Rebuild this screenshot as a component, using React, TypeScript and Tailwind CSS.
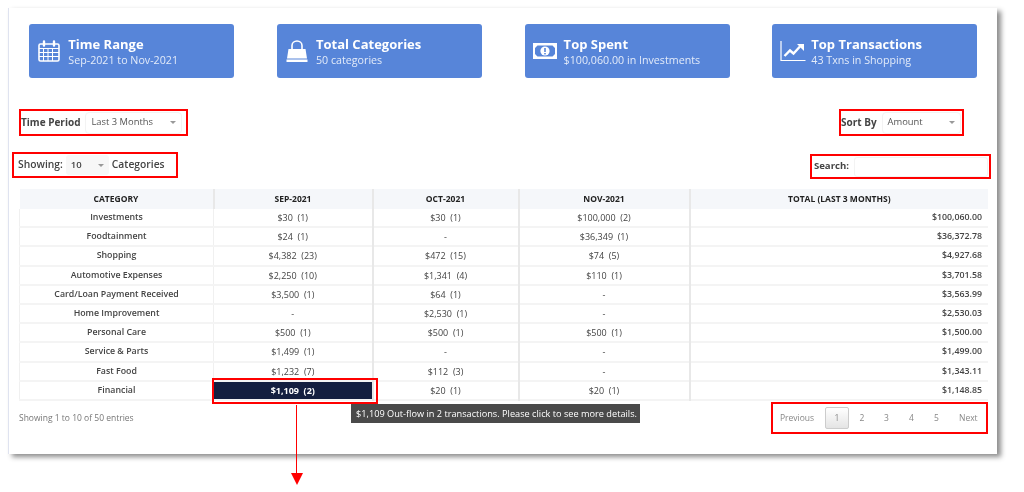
import { ReactNode } from 'react';

const rows = [
  ['Investments', '$30  (1)', '$30  (1)', '$100,000  (2)', '$100,060.00'],
  ['Foodtainment', '$24  (1)', '-', '$36,349  (1)', '$36,372.78'],
  ['Shopping', '$4,382  (23)', '$472  (15)', '$74  (5)', '$4,927.68'],
  ['Automotive Expenses', '$2,250  (10)', '$1,341  (4)', '$110  (1)', '$3,701.58'],
  ['Card/Loan Payment Received', '$3,500  (1)', '$64  (1)', '-', '$3,563.99'],
  ['Home Improvement', '-', '$2,530  (1)', '-', '$2,530.03'],
  ['Personal Care', '$500  (1)', '$500  (1)', '$500  (1)', '$1,500.00'],
  ['Service & Parts', '$1,499  (1)', '-', '-', '$1,499.00'],
  ['Fast Food', '$1,232  (7)', '$112  (3)', '-', '$1,343.11'],
  ['Financial', '$1,109  (2)', '$20  (1)', '$20  (1)', '$1,148.85'],
];

function CalendarIcon() {
  return (
    <svg width="24" height="24" viewBox="0 0 24 24" fill="none" stroke="white">
      <rect x="2" y="5" width="20" height="17" rx="1.5" strokeWidth="1.6" />
      <path d="M2 9.5h20M6.5 9.5V22M11 9.5V22M15.5 9.5V22M2 13.5h20M2 17.5h20" strokeWidth="1" />
      <path d="M7 2.5v4M17 2.5v4" strokeWidth="2.4" strokeLinecap="round" />
    </svg>
  );
}

function BagIcon() {
  return (
    <svg width="24" height="24" viewBox="0 0 24 24" fill="white">
      <path d="M3.5 10h17l1.5 9.5H2z" />
      <rect x="1.5" y="20.5" width="21" height="2.5" />
      <path d="M7 11V6.5a5 4.5 0 0 1 10 0V11" fill="none" stroke="white" strokeWidth="1.6" />
    </svg>
  );
}

function MoneyIcon() {
  return (
    <svg width="24" height="16" viewBox="0 0 24 16">
      <path fillRule="evenodd" fill="white" d="M0 0h24v16H0zM4.5 2.5 2 5v6l2.5 2.5h15L22 11V5l-2.5-2.5z" />
      <circle cx="12" cy="8" r="4.6" fill="white" />
      <rect x="11.2" y="5" width="1.6" height="4" fill="#5785d9" />
      <rect x="11.2" y="10" width="1.6" height="1.4" fill="#5785d9" />
    </svg>
  );
}

function ChartIcon() {
  return (
    <svg width="26" height="22" viewBox="0 0 26 22" fill="none" stroke="white">
      <path d="M1 1v19.5h24.5" strokeWidth="1.2" />
      <path d="M4.5 16 10 10.5l3.5 3L20 6.5" strokeWidth="2.4" />
      <path d="M17 4h7v7z" fill="white" stroke="none" />
    </svg>
  );
}

function StatCard({ icon, title, sub }: { icon: ReactNode; title: string; sub: string }) {
  return (
    <div className="flex h-[54px] w-[205px] items-center rounded-[3px] bg-[#5785d9] pl-[8px] text-white">
      <div className="flex w-[31px] shrink-0 justify-start">{icon}</div>
      <div className="pt-[1px]">
        <div className="text-[13px] leading-[17px] font-bold">{title}</div>
        <div className="text-[10.7px] leading-[15px] text-[#e3ebf9]">{sub}</div>
      </div>
    </div>
  );
}

function Select({ label, width }: { label: string; width: string }) {
  return (
    <div className={`flex h-[22px] items-center justify-between rounded-[4px] border border-[#f3f3f3] px-[5px] pb-[1px] ${width}`}>
      <span className="text-[9.4px] text-[#555]">{label}</span>
      <span className="border-x-[3px] border-t-[3px] border-x-transparent border-t-[#999]" />
    </div>
  );
}

export default function App() {
  return (
    <div className="relative h-[492px] w-[1024px] overflow-hidden bg-white font-['Open_Sans',sans-serif] blur-[0.4px]">
      <div className="mt-[8px] ml-[8px] h-[446px] w-[989px] border-l border-[#dfe3f0] bg-white pt-[16px] shadow-[4px_3px_5px_rgba(0,0,0,0.45)]">
        <div className="ml-[20.3px] flex w-[948px] justify-between">
          <StatCard icon={<CalendarIcon />} title="Time Range" sub="Sep-2021 to Nov-2021" />
          <StatCard icon={<BagIcon />} title="Total Categories" sub="50 categories" />
          <StatCard icon={<MoneyIcon />} title="Top Spent" sub="$100,060.00 in Investments" />
          <StatCard icon={<ChartIcon />} title="Top Transactions" sub="43 Txns in Shopping" />
        </div>

        <div className="mt-[31px] flex justify-between pr-[33px] pl-[10px]">
          <div className="flex h-[27px] w-[169px] items-center gap-[5px] border-2 border-[#f00]">
            <b className="text-[10px] font-bold text-[#444]">Time Period</b>
            <Select label="Last 3 Months" width="w-[97px]" />
          </div>
          <div className="flex h-[27px] w-[125px] items-center gap-[5px] border-2 border-[#f00]">
            <b className="text-[10px] font-bold text-[#444]">Sort By</b>
            <Select label="Amount" width="w-[79px]" />
          </div>
        </div>

        <div className="mt-[16px] flex items-start justify-between pr-[6px] pl-[3px]">
          <div className="flex h-[26px] w-[166px] items-center border-2 border-[#f00] pl-[4px] text-[10.3px] font-semibold text-[#444]">
            <span>Showing:</span>
            <div className="mx-[3px] flex h-[20px] w-[43px] items-center justify-between rounded-[3px] bg-[#f7f7f7] px-[5px]">
              <span className="text-[9.5px]">10</span>
              <span className="border-x-[3px] border-t-[3px] border-x-transparent border-t-[#999]" />
            </div>
            <span>Categories</span>
          </div>
          <div className="mt-[2px] flex h-[25px] w-[181px] items-center justify-end gap-[5px] border-2 border-[#f00] pr-[1px] text-[9.6px] font-bold text-[#444]">
            <span>Search:</span>
            <div className="h-[20px] w-[134px] rounded-[3px] border border-[#f3f3f3]" />
          </div>
        </div>

        <table className="mt-[10px] ml-[10px] w-[969px] table-fixed border-collapse text-[9px] text-[#444]">
          <colgroup>
            <col className="w-[194px]" />
            <col className="w-[159px]" />
            <col className="w-[146px]" />
            <col className="w-[171px]" />
            <col />
          </colgroup>
          <thead>
            <tr className="h-[20px] bg-[#f5f7fa] text-[8.5px] text-[#222]">
              {['CATEGORY', 'SEP-2021', 'OCT-2021', 'NOV-2021', 'TOTAL (LAST 3 MONTHS)'].map((h) => (
                <th key={h} className="border-r-2 border-[#e8e8e8] p-0 font-bold last:border-r-0">
                  {h}
                </th>
              ))}
            </tr>
          </thead>
          <tbody>
            {rows.map((r, i) => (
              <tr
                key={r[0]}
                className={`border-b-2 border-[#f4f4f4] ${i === 0 ? 'h-[18px]' : i === 2 || i === 7 ? 'h-[20px]' : 'h-[19px]'}`}
              >
                <td className="border-x border-[#f0f0f0] p-0 text-center text-[8.8px] font-semibold">{r[0]}</td>
                {[1, 2, 3].map((c) => {
                  const hot = i === 9 && c === 1;
                  return (
                    <td
                      key={c}
                      className={`border-r-2 border-[#e8e8e8] p-0 text-center whitespace-pre ${hot ? 'bg-[#141f40] font-bold text-white' : ''}`}
                    >
                      {r[c]}
                    </td>
                  );
                })}
                <td className="p-0 pr-[6px] text-right text-[8.8px] font-semibold">{r[4]}</td>
              </tr>
            ))}
          </tbody>
        </table>

        <div className="mt-[1px] flex items-start justify-between pr-[9px] pl-[10px]">
          <span className="mt-[10px] text-[8.5px] text-[#777]">Showing 1 to 10 of 50 entries</span>
          <div className="flex h-[32px] w-[217px] items-center border-2 border-[#f00] pl-[7px] text-[8.5px] text-[#888]">
            <span className="w-[45px]">Previous</span>
            <span className="flex h-[22px] w-[24px] items-center justify-center rounded-[2px] border border-[#ccc] bg-gradient-to-b from-white to-[#e4e4e4]">
              1
            </span>
            <span className="w-[25px] pl-[1px] text-center">2</span>
            <span className="w-[25px] text-center">3</span>
            <span className="w-[25px] text-center">4</span>
            <span className="w-[25px] text-center">5</span>
            <span className="ml-[10px]">Next</span>
          </div>
        </div>
      </div>

      {/* annotations on top of the table */}
      <div className="absolute top-[378px] left-[212px] h-[26px] w-[166px] border-2 border-[#f00]" />
      <div className="absolute top-[404px] left-[351px] flex h-[19px] w-[289px] items-center bg-[#4a4a4a] pl-[5px] text-[9.2px] whitespace-nowrap text-white">
        $1,109 Out-flow in 2 transactions. Please click to see more details.
      </div>
      <svg className="absolute top-[404px] left-[288px]" width="18" height="82" viewBox="0 0 18 82">
        <path d="M8.5 1v70" stroke="#f00" strokeWidth="1" />
        <path d="M3 69h12l-6 12z" fill="#f00" />
      </svg>
    </div>
  );
}
